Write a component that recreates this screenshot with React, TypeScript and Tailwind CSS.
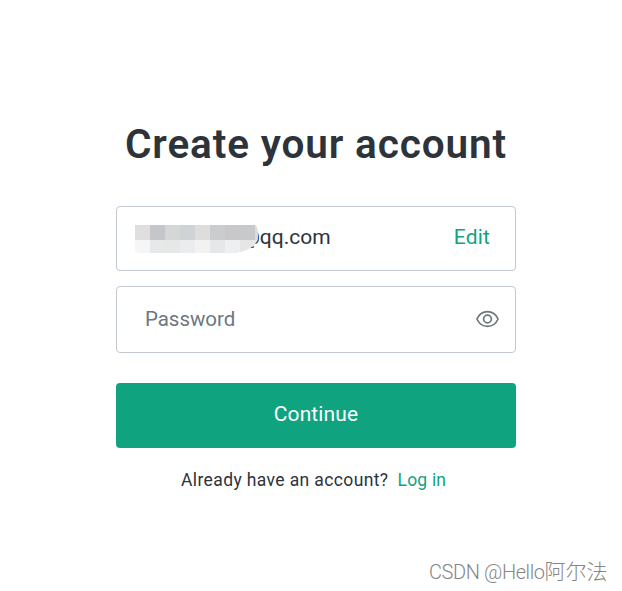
const mosaicTop = ["bg-[#e0dfde]", "bg-[#c5c6ca]", "bg-[#d5d6d6]", "bg-[#cfd3d6]", "bg-[#dddddd]", "bg-[#cbccce]", "bg-[#c8c8ca]", "bg-[#c7c9cb]"];
const mosaicBottom = ["bg-[#f6f6f6]", "bg-[#e7e8e9]", "bg-[#e6e8e8]", "bg-[#ebecee]", "bg-[#f2f2f1]", "bg-[#e6e7e9]", "bg-[#eeeff1]", "bg-[#e6e6e7]"];

function HiddenName() {
  return (
    <div aria-hidden="true" className="absolute top-0 left-0 z-10 w-[123px] overflow-hidden rounded-tr-[3px_10px] rounded-br-[28px_16px] rounded-bl-[9px_3px]">
      <div className="flex h-[15px] bg-[#dcdcdd]">
        {mosaicTop.map((color, i) => <span key={i} className={`w-[15px] ${color}`} />)}
      </div>
      <div className="flex h-[13px] bg-[#e6e6e7]">
        {mosaicBottom.map((color, i) => <span key={i} className={`w-[15px] ${color}`} />)}
      </div>
    </div>
  );
}

function EyeIcon() {
  return (
    <svg width="24" height="18" viewBox="0 0 24 18" fill="none" stroke="#6e7780" strokeWidth="1.7">
      <path d="M.9 9C3.1 4.2 6.9 1.7 11.5 1.7S19.9 4.2 22.1 9C19.9 13.8 16.1 16.3 11.5 16.3S3.1 13.8 .9 9Z" strokeLinejoin="round" />
      <circle cx="11.5" cy="9" r="3.9" />
    </svg>
  );
}

export default function App() {
  return (
    <main className="flex h-[591px] w-[622px] flex-col overflow-hidden bg-white pl-[116px] font-['Roboto',sans-serif] text-[#2d333a]">
      <h1 className="mt-[120px] ml-[9px] h-[50px] text-[40.5px] leading-[49px] font-semibold tracking-[0.87px] whitespace-nowrap">Create your account</h1>
      <div className="mt-9 flex h-[65px] w-[400px] justify-between rounded border border-[#c2c8d0] pt-[18px] pr-[25px] pl-[18px] text-[21px] leading-6">
        <div className="relative h-7 w-[200px]">
          <HiddenName />
          <span className="ml-[106px]">@qq.com</span>
        </div>
        <a className="tracking-[0.15px] text-[#10a37f]">Edit</a>
      </div>
      <div className="mt-[15px] flex h-[67px] w-[400px] items-center justify-between rounded border border-[#c2c8d0] pr-[15px] pb-[2px] pl-7">
        <span className="text-[20.5px] leading-6 tracking-[-0.05px] text-[#6e7780]">Password</span>
        <EyeIcon />
      </div>
      <button className="mt-[30px] h-[65px] w-[400px] rounded bg-[#10a37f] pb-[2px] text-[21px] leading-[25px] tracking-[0.1px] text-white">Continue</button>
      <p className="mt-5 flex w-[400px] gap-[9px] pl-[65px] text-[17.5px] leading-6 whitespace-nowrap">
        <span className="tracking-[0.38px]">Already have an account?</span>
        <a className="tracking-[0.2px] text-[#10a37f]">Log in</a>
      </p>
      <footer className="mt-auto mb-[5px] ml-[313px] text-[20px] leading-[28px] font-light tracking-[-0.4px] whitespace-nowrap text-[#858585] [font-family:Roboto,'Noto_Sans_CJK_SC',sans-serif]">CSDN @Hello<span className="text-[21px] tracking-normal">阿尔法</span></footer>
    </main>
  );
}
